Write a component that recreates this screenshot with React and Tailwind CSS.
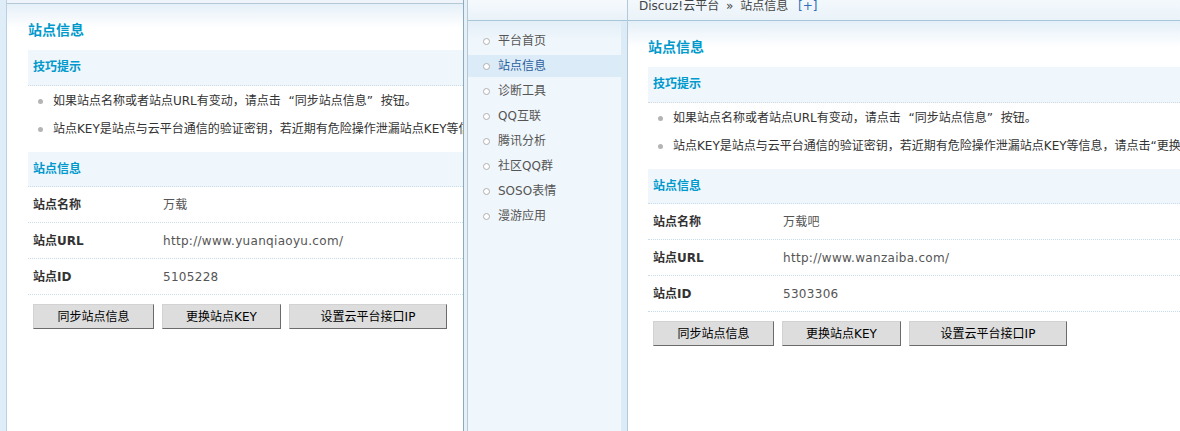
import React from 'react';

const tips = [
  ['如果站点名称或者站点URL有变动，请点击', '同步站点信息', '按钮。'],
  ['站点KEY是站点与云平台通信的验证密钥，若近期有危险操作泄漏站点KEY等信息，请点击', '更换站点KEY', '按钮。'],
];

const menu = ['平台首页', '站点信息', '诊断工具', 'QQ互联', '腾讯分析', '社区QQ群', 'SOSO表情', '漫游应用'];

const SiteInfo = ({ name, url, id }) => {
  const rows = [
    ['站点名称', name],
    ['站点URL', url],
    ['站点ID', id],
  ];
  return (
    <div className="pt-[16px]">
      <h3 className="h-[20px] text-[14px] leading-[20px] font-bold text-[#0099cc]">站点信息</h3>

      <div className="mt-[10px] h-[36px] border-b border-dotted border-[#cdd9e3] bg-[#eff6fc] pl-[5px] text-[12px] leading-[35px] font-bold text-[#0099cc]">
        技巧提示
      </div>
      <ul className="pt-[1px] pb-[9px] text-[12px] leading-[28px] text-[#333]">
        {tips.map(([a, q, b]) => (
          <li key={a} className="flex items-center whitespace-nowrap pl-[10px]">
            <span className="mr-[10px] h-[5px] w-[5px] shrink-0 rounded-full bg-[#b4b4b4]" />
            {a}
            <span className="inline-block w-[14px] text-right">“</span>
            {q}
            <span className="inline-block w-[14px] text-left">”</span>
            {b}
          </li>
        ))}
      </ul>

      <div className="h-[35px] border-b border-dotted border-[#c9dcec] bg-[#eff6fc] pl-[5px] text-[12px] leading-[34px] font-bold text-[#0099cc]">
        站点信息
      </div>
      {rows.map(([label, value]) => (
        <div key={label} className="flex h-[36px] items-center border-b border-dotted border-[#c9dcec] pl-[5px] text-[12px]">
          <span className="w-[130px] shrink-0 font-bold text-[#333]">{label}</span>
          <span className="tracking-[0.3px] text-[#555]">{value}</span>
        </div>
      ))}

      <div className="mt-[9px] ml-[5px] flex gap-[8px] text-[12px] text-black">
        <button className="h-[25px] w-[121px] border border-[#d2d2d2] border-r-[#6b6b6b] border-b-[#6b6b6b] bg-[#dddddd]">同步站点信息</button>
        <button className="h-[25px] w-[119px] border border-[#d2d2d2] border-r-[#6b6b6b] border-b-[#6b6b6b] bg-[#dddddd]">更换站点KEY</button>
        <button className="h-[25px] w-[158px] border border-[#d2d2d2] border-r-[#6b6b6b] border-b-[#6b6b6b] bg-[#dddddd]">设置云平台接口IP</button>
      </div>
    </div>
  );
};

export default function App() {
  return (
    <div className="flex h-[431px] w-[1180px] overflow-hidden bg-white font-['DejaVu_Sans','Noto_Sans_CJK_SC',sans-serif]">
      {/* left window */}
      <div className="flex w-[463px] shrink-0">
        <div className="w-[7px] shrink-0 border-r border-[#bcd1df] bg-[#dfedf8]" />
        <div className="min-w-0 flex-1 overflow-hidden">
          <div className="h-[4px] border-b border-[#b3c9d8] bg-[#eef4f9]" />
          <div className="h-[427px] bg-[linear-gradient(#e6f0f8,#ffffff_24px)] pl-[21px]">
            <SiteInfo name="万载" url="http://www.yuanqiaoyu.com/" id="5105228" />
          </div>
        </div>
      </div>

      {/* right window */}
      <div className="flex min-w-0 flex-1 border-l border-[#8eaabd]">
        <div className="w-[3px] shrink-0 bg-[#e6f0f7]" />

        <div className="flex w-[161px] shrink-0 flex-col border-x border-[#b1c9d9]">
          <div className="h-[21px] shrink-0 border-b border-[#a9c6d8] bg-[linear-gradient(#f6fafd,#e9f2f9)]" />
          <div className="flex flex-1">
            <ul className="flex-1 bg-[linear-gradient(#e3eef7,#f0f7fc_20px)] pt-[9px] text-[12px] text-[#555]">
              {menu.map((m) => (
                <li
                  key={m}
                  className={
                    m === '站点信息'
                      ? 'mb-[3px] flex h-[22px] items-center bg-[#dbebf7] pl-[15px] text-[#2b5f9e]'
                      : 'mb-[3px] flex h-[22px] items-center pl-[15px]'
                  }
                >
                  <span className="mr-[8px] h-[7px] w-[7px] shrink-0 rounded-full border border-[#b0b0b0] bg-white" />
                  {m}
                </li>
              ))}
            </ul>
            <div className="w-[6px] shrink-0 bg-[#dcebf6]" />
          </div>
        </div>

        <div className="min-w-0 flex-1 overflow-hidden">
          <div className="h-[21px] overflow-hidden border-b border-[#a9c6d8] bg-[linear-gradient(#f3f8fc,#eaf3f9)] pl-[11px] text-[12px] leading-[12px] whitespace-nowrap text-[#444]">
            Discuz!云平台 <span className="mx-[3px]">»</span> 站点信息 <span className="ml-[6px] text-[#2e6fb5]">[+]</span>
          </div>
          <div className="h-[410px] bg-[linear-gradient(#e4eff8,#ffffff_26px)] pl-[20px]">
            <SiteInfo name="万载吧" url="http://www.wanzaiba.com/" id="5303306" />
          </div>
        </div>
      </div>
    </div>
  );
}
